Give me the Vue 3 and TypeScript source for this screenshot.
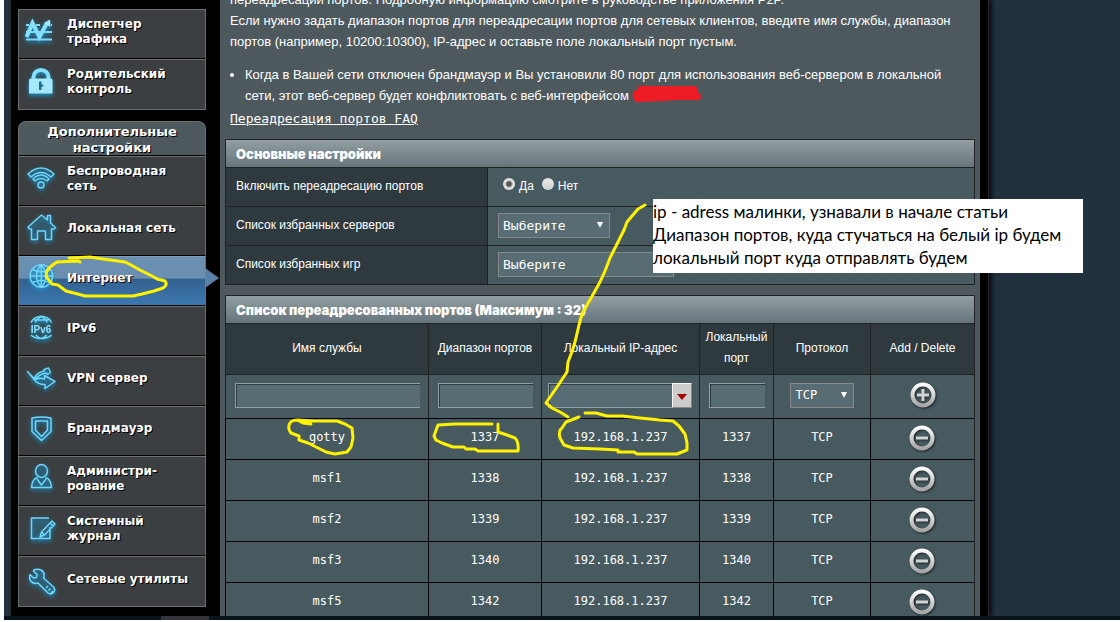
<script setup lang="ts">
import { ref } from 'vue'

interface MenuItem {
  icon: string
  lines: string[]
  active?: boolean
}
interface Rule {
  name: string
  range: string
  ip: string
  port: string
  proto: string
}

const general: MenuItem[] = [
  { icon: 'traffic', lines: ['Диспетчер', 'трафика'] },
  { icon: 'lock', lines: ['Родительский', 'контроль'] },
]
const advanced: MenuItem[] = [
  { icon: 'wifi', lines: ['Беспроводная', 'сеть'] },
  { icon: 'house', lines: ['Локальная сеть'] },
  { icon: 'globe', lines: ['Интернет'], active: true },
  { icon: 'ipv6', lines: ['IPv6'] },
  { icon: 'vpn', lines: ['VPN сервер'] },
  { icon: 'shield', lines: ['Брандмауэр'] },
  { icon: 'admin', lines: ['Администри-', 'рование'] },
  { icon: 'journal', lines: ['Системный', 'журнал'] },
  { icon: 'wrench', lines: ['Сетевые утилиты'] },
]
const groups = [
  { title: [] as string[], items: general },
  { title: ['Дополнительные', 'настройки'], items: advanced },
]

const icons: Record<string, string> = {
  wifi: 'M9 17Q22 5 35 17L32 20Q22 11 12 20ZM14 22Q22 14 30 22L28 24Q22 19 16 24ZM19 28a3 3 0 1 0 6 0a3 3 0 1 0-6 0',
  house: 'M9 20L22.500 8L28.500 13V8.500H31.500V16L36.500 20.500L35 22H32.500V32.500H26.500V24H18.500V32.500H12.500V22H10.500Z',
  globe: 'M11 19a11.300 11.300 0 1 0 22.600 0a11.300 11.300 0 1 0-22.600 0M11 19H33.600M22.300 7.700V30.300M22.300 7.700Q12.500 19 22.300 30.300M22.300 7.700Q32 19 22.300 30.300M13.500 12.500Q22.300 17 31 12.500M13.500 25.500Q22.300 21 31 25.500',
  ipv6: 'M12 15.500Q14.500 10 22.300 9.300Q30 10 32.500 15.500M12 28Q14.500 31 22.300 31.600Q30 31 32.500 28M15 13H29.500M22.300 9.500Q17 12 16.500 15.500M22.300 9.500Q27.500 12 28 15.500M17 28Q18.500 30.500 22.300 31.500Q26 30.500 27.500 28',
  vpn: 'M8.500 14.500L15 21.500Q18 15 25.500 14L25 12.500L29.500 11L31.500 15.500L28.500 17.500L27.500 16Q20 17 15.500 23ZM15.500 23Q20 20 25.500 22V18.500L36 24.500L26 31.500V27.500Q20 28 15.500 23',
  shield: 'M13 11Q22.500 9 32 11V24.500L22.500 33.500L13 24.500ZM16.500 14H28.500V23L22.500 29.500L16.500 23Z',
  admin: 'M16.500 14a6 6.500 0 1 0 12 0a6 6.500 0 1 0-12 0M18.500 20.500Q13 22 12.500 30.500H32.500Q32 22 26.500 20.500M18 22L22.500 28L27 22',
  journal: 'M31 20V31.500H12.500V11H30M21 30L22.500 25L33 14L36 17L25.500 28ZM22.500 25L25.500 28M31 16L34 19',
  wrench: 'M14 12.500L18 16.500L17.500 19.500L14.500 20L11 16.500Q9.500 22 13.500 24.500Q16 26 19 25L29 35Q32 37 34.500 34.500Q37 31.500 34.500 29L24.500 20Q26.500 14.500 22 12Q18 10.500 14 12.500M29 28L27 30M31.500 30.500L29.500 32.500M34 33l-2 2',
}

const rules: Rule[] = [
  { name: 'gotty', range: '1337', ip: '192.168.1.237', port: '1337', proto: 'TCP' },
  { name: 'msf1', range: '1338', ip: '192.168.1.237', port: '1338', proto: 'TCP' },
  { name: 'msf2', range: '1339', ip: '192.168.1.237', port: '1339', proto: 'TCP' },
  { name: 'msf3', range: '1340', ip: '192.168.1.237', port: '1340', proto: 'TCP' },
  { name: 'msf5', range: '1342', ip: '192.168.1.237', port: '1342', proto: 'TCP' },
]

const enabled = ref('yes')
const server = ref('Выберите')
const game = ref('Выберите')
const proto = ref('TCP')
</script>

<template>
  <div class="page">
    <div class="viewport">
      <nav class="sidebar">
        <section v-for="(group, g) in groups" :key="g">
          <h2 v-if="group.title.length" class="group-title">
            <span v-for="line in group.title" :key="line">{{ line }}</span>
          </h2>
          <a v-for="item in group.items" :key="item.icon" href="#" class="item" :class="{ active: item.active }">
            <svg class="item-icon" viewBox="0 0 48 48" aria-hidden="true">
              <g v-if="item.icon === 'traffic'">
                <path d="M7 15H10M17 15H21M32 15H33M7 22H33M7 29.500H33" class="thin" />
                <path d="M7.500 27L13.500 13L20.500 27L28 13" class="thick" />
                <path d="M25 13L31 9.500L31.500 17Z" class="solid" />
              </g>
              <g v-else-if="item.icon === 'lock'">
                <path d="M14.500 18V16a7.500 7 0 0 1 15 0V18" class="thick" />
                <path d="M10 19Q10 17.500 12 17.500H31.500Q33.500 17.500 33.500 19V32.500H10Z" class="solid" />
                <path d="M20 20.500H22.500V23L25 24.500L22.500 26V29H20Z" class="hole" />
              </g>
              <path v-else :d="icons[item.icon]" class="line" />
              <text v-if="item.icon === 'ipv6'" x="22" y="26" text-anchor="middle" class="icon-text">IPv6</text>
            </svg>
            <span class="item-text">
              <span v-for="line in item.lines" :key="line">{{ line }}</span>
            </span>
          </a>
        </section>
      </nav>

      <main class="panel">
        <p class="desc">
          переадресации портов. Подробную информацию смотрите в руководстве приложения P2P.<br />
          Если нужно задать диапазон портов для переадресации портов для сетевых клиентов, введите имя службы, диапазон<br />
          портов (например, 10200:10300), IP-адрес и оставьте поле локальный порт пустым.
        </p>
        <ul class="notes">
          <li>
            Когда в Вашей сети отключен брандмауэр и Вы установили 80 порт для использования веб-сервером в локальной<br />
            сети, этот веб-сервер будет конфликтовать с веб-интерфейсом
          </li>
        </ul>
        <a href="#" class="faq">Переадресация портов FAQ</a>

        <table class="grid basic">
          <colgroup><col class="c-label" /><col /></colgroup>
          <thead>
            <tr><th colspan="2" class="title">Основные настройки</th></tr>
          </thead>
          <tbody>
            <tr>
              <th scope="row">Включить переадресацию портов</th>
              <td>
                <div class="radios">
                  <label><input v-model="enabled" type="radio" name="enabled" value="yes" /><span>Да</span></label>
                  <label><input v-model="enabled" type="radio" name="enabled" value="no" /><span>Нет</span></label>
                </div>
              </td>
            </tr>
            <tr>
              <th scope="row"><label for="server">Список избранных серверов</label></th>
              <td>
                <span class="pick w-server">
                  <select id="server" v-model="server"><option>Выберите</option></select>
                  <svg viewBox="0 0 8 8" aria-hidden="true"><path d="M1 1H7L4 7Z" /></svg>
                </span>
              </td>
            </tr>
            <tr>
              <th scope="row"><label for="game">Список избранных игр</label></th>
              <td>
                <span class="pick w-game">
                  <select id="game" v-model="game"><option>Выберите</option></select>
                  <svg viewBox="0 0 8 8" aria-hidden="true"><path d="M1 1H7L4 7Z" /></svg>
                </span>
              </td>
            </tr>
          </tbody>
        </table>

        <table class="grid ports">
          <colgroup>
            <col /><col class="c-range" /><col class="c-ip" /><col class="c-port" /><col class="c-proto" /><col class="c-act" />
          </colgroup>
          <thead>
            <tr><th colspan="6" class="title">Список переадресованных портов (Максимум : 32)</th></tr>
            <tr class="heads">
              <th scope="col">Имя службы</th>
              <th scope="col">Диапазон портов</th>
              <th scope="col">Локальный IP-адрес</th>
              <th scope="col">Локальный порт</th>
              <th scope="col">Протокол</th>
              <th scope="col">Add / Delete</th>
            </tr>
          </thead>
          <tbody>
            <tr class="entry">
              <td><input type="text" class="field" aria-label="Имя службы" /></td>
              <td><input type="text" class="field" aria-label="Диапазон портов" /></td>
              <td>
                <div class="combo">
                  <input type="text" class="field" aria-label="Локальный IP-адрес" />
                  <button type="button" aria-label="Выбрать адрес">
                    <svg viewBox="0 0 12 8" aria-hidden="true"><path d="M1 1H11L6 7Z" /></svg>
                  </button>
                </div>
              </td>
              <td><input type="text" class="field" aria-label="Локальный порт" /></td>
              <td>
                <span class="pick w-proto">
                  <select v-model="proto" aria-label="Протокол"><option>TCP</option><option>UDP</option></select>
                  <svg viewBox="0 0 8 8" aria-hidden="true"><path d="M1 1H7L4 7Z" /></svg>
                </span>
              </td>
              <td>
                <button type="button" class="round" aria-label="Добавить">
                  <svg viewBox="0 0 28 28" aria-hidden="true">
                    <defs>
                      <linearGradient id="metal" x1="0" y1="0" x2="0" y2="28" gradientUnits="userSpaceOnUse">
                        <stop offset="0.1" stop-color="#ffffff" />
                        <stop offset="0.9" stop-color="#a4a4a4" />
                      </linearGradient>
                    </defs>
                    <circle cx="14" cy="14" r="10.500" class="ring" />
                    <path d="M12.500 8H15.500V12.500H20V15.500H15.500V20H12.500V15.500H8V12.500H12.500Z" class="sign" />
                  </svg>
                </button>
              </td>
            </tr>
            <tr v-for="rule in rules" :key="rule.name" class="rule">
              <td>{{ rule.name }}</td>
              <td>{{ rule.range }}</td>
              <td>{{ rule.ip }}</td>
              <td>{{ rule.port }}</td>
              <td>{{ rule.proto }}</td>
              <td>
                <button type="button" class="round" aria-label="Удалить">
                  <svg viewBox="0 0 28 28" aria-hidden="true">
                    <circle cx="14" cy="14" r="10.500" class="ring" />
                    <path d="M8 12.500H20V15.500H8Z" class="sign" />
                  </svg>
                </button>
              </td>
            </tr>
          </tbody>
        </table>
      </main>
    </div>
    <div class="taskbar"><span></span></div>

    <svg class="ink" width="1120" height="622" aria-hidden="true">
      <path class="red" d="M634 91L637 90L639 86Q641 85 645 86L695 86Q698 87 698 92Q703 96 700 99Q697 101 692 100L675 100L664 101L640 102Q635 103 634 99Q631 95 634 91Z" />
      <path d="M69 258L90 257L103 259L125 262L131 265L140 270L152 276L157 279L165 281Q168 285 163 288L154 291L142 294L133 296L85 296L74 293L66 291L58 285L52 284L48 279Q45 276 47 271L50 267L57 262L78 261L80 262" />
      <path d="M645 205L638 209L632 216L627 222L624 230L620 238L616 246L610 258L605 271L600 282L595 291L587 305L582 314L579 325L576 338L573 349L568 362L567 372L561 381L557 387L548 400L546 403L552 408L560 412L568 417" />
      <path d="M311 424L303 423L297 420L314 421L337 421L345 424L352 428L353 438L351 447L347 452L335 454L326 452L316 447L308 443L299 440L299 436L291 433Q287 428 290 423Q292 420 297 420" />
      <path d="M492 424L455 424L438 425L434 436L436 440L442 443L453 447L464 447L466 449L475 449L478 451L518 451Q519 442 515 438L507 435L498 432L498 424" />
      <path d="M585 413L596 413L607 416L622 416L640 418L660 420L673 421L679 426L685 434L687 443V450L677 454L637 454L634 452L618 452V450L600 449L573 448L564 445L560 438Q558 431 562 428L566 422L579 417" />
    </svg>
    <p class="callout">
      ip - adress малинки, узнавали в начале статьи<br />
      Диапазон портов, куда стучаться на белый ip будем<br />
      локальный порт куда отправлять будем
    </p>
  </div>
</template>

<style>
body {
  margin: 0;
  overflow: hidden;
}
</style>

<style scoped>
* {
  box-sizing: border-box;
}
.page {
  position: relative;
  display: flex;
  flex-direction: column;
  height: 100vh;
  padding: 0 0 2px 4px;
  overflow: hidden;
  background: #fff;
  color: #fff;
  font: 12px/21px "Liberation Sans", Arial, sans-serif;
}
.viewport {
  display: flex;
  flex: 1;
  min-height: 0;
  padding: 0 132px 0 6px;
  overflow: hidden;
  background: #21323e;
}
.taskbar {
  flex: none;
  height: 4px;
  padding-left: 157px;
  background: #08131a;
}
.taskbar span {
  display: block;
  width: 48px;
  height: 4px;
  background: #33363a;
}

/* left menu */
.sidebar {
  flex: none;
  display: flex;
  flex-direction: column;
  gap: 11px;
  width: 210px;
  padding: 9px 14px 0 7px;
  border-left: 1px solid #2a2a2a;
  background: #000;
  font: bold 12px/15px "DejaVu Sans", Verdana, sans-serif;
  text-shadow: 1px 1px 0 #000;
}
.group-title {
  display: flex;
  flex-direction: column;
  height: 35px;
  margin: 0;
  padding-top: 2px;
  border: 1px solid #6b7071;
  border-bottom-color: #000;
  border-radius: 8px 8px 0 0;
  background: #4d595d;
  font-size: 13px;
  line-height: 16px;
  text-align: center;
}
.item {
  position: relative;
  display: flex;
  align-items: center;
  height: 50px;
  border: 1px solid #6b7071;
  border-bottom-color: #000;
  background: #3b3f41;
  color: #fff;
  text-decoration: none;
}
.item:last-child {
  height: 51px;
  border-bottom-color: #6b7071;
}
.item.active {
  border-top-color: #7d9cb8;
  background: linear-gradient(#6b8fb0 0 44%, #33618f 46%, #3c78b0);
}
.item.active::after {
  content: "";
  position: absolute;
  top: 11px;
  left: 100%;
  width: 14px;
  height: 20px;
  background: #5b81a6;
  clip-path: polygon(0 0, 100% 50%, 0 100%);
}
.item-icon {
  flex: none;
  width: 48px;
  height: 48px;
  filter: drop-shadow(0 2px 2px #1593cc);
}
.item-text {
  display: flex;
  flex-direction: column;
  padding-bottom: 5px;
  white-space: nowrap;
}
.line {
  fill: #2b7fa033;
  fill-rule: evenodd;
  stroke: #6fd6fa;
  stroke-width: 1.5;
  stroke-linejoin: round;
}
.thin {
  fill: none;
  stroke: #7fd8f6;
  stroke-width: 2;
}
.thick {
  fill: none;
  stroke: #86dffc;
  stroke-width: 4;
}
.solid {
  fill: #a5e8fd;
}
.hole {
  fill: #1e6f8f;
}
.icon-text {
  fill: #8fe2fb;
  font: bold 10px "Liberation Sans", sans-serif;
  text-shadow: none;
}

/* content */
.panel {
  flex: 1;
  min-width: 0;
  padding: 0 5px;
  border-right: 8px solid #000;
  background: #4d595d;
  box-shadow: 1px 0 0 #2a2a2a, 3px 0 5px #000;
}
.desc {
  margin: -11px 0 12px;
  padding-left: 5px;
  font-size: 13px;
  white-space: nowrap;
}
.notes {
  margin: 0;
  padding-left: 20px;
  font-size: 13px;
  white-space: nowrap;
}
.faq {
  display: block;
  width: max-content;
  margin: 2px 0 10px 5px;
  color: #fff;
  font: 13px/21px "DejaVu Sans Mono", monospace;
}
.grid {
  width: 100%;
  border: solid #222;
  border-width: 0 1px 1px 0;
  border-spacing: 0;
  table-layout: fixed;
  background: #475a5f;
}
.grid th,
.grid td {
  padding: 0 10px 2px;
  border: solid #222;
  border-width: 1px 0 0 1px;
  font-weight: normal;
}
.grid th {
  background: #2f3a3e;
}
.grid .title {
  height: 28px;
  padding: 0 10px;
  background: linear-gradient(#929ea1, #66757c);
  font: 900 13px/20px Inter, "Liberation Sans", sans-serif;
  text-align: left;
}
.basic {
  margin-bottom: 10px;
}
.basic tbody th {
  height: 39px;
  text-align: left;
}
.c-label {
  width: 262px;
}
.radios {
  display: flex;
  gap: 8px;
  padding-left: 5px;
}
.radios label {
  display: flex;
  align-items: center;
  gap: 4px;
}
.radios input {
  appearance: none;
  width: 12px;
  height: 12px;
  margin: 0 0 4px;
  border-radius: 50%;
  background: linear-gradient(#e8e8e8, #d4d4d4);
}
.radios input:checked {
  background: radial-gradient(circle, #555 0 2px, #e2e2e2 4px);
}
.pick {
  position: relative;
  display: block;
  height: 25px;
}
.pick select {
  appearance: none;
  width: 100%;
  height: 25px;
  padding: 0 4px;
  border: 1px solid #888;
  border-radius: 0;
  background: #576d73;
  color: #fff;
  font: 13px "DejaVu Sans Mono", monospace;
}
.pick svg {
  position: absolute;
  top: 8px;
  right: 6px;
  width: 8px;
  height: 8px;
  fill: #fff;
  pointer-events: none;
}
.w-server {
  width: 112px;
}
.w-game {
  width: 176px;
}
.w-proto {
  width: 64px;
  margin: 0 auto;
}
.pick.w-proto select {
  font-size: 12px;
}
.c-range {
  width: 113px;
}
.c-ip {
  width: 158px;
}
.c-port {
  width: 74px;
}
.c-proto {
  width: 97px;
}
.c-act {
  width: 104px;
}
.ports th,
.ports td {
  text-align: center;
}
.ports .heads th {
  height: 51px;
  padding: 0 2px 2px;
}
.ports .entry td {
  height: 44px;
  padding: 0 8px 3px 9px;
  line-height: 0;
}
.ports .entry td:nth-child(3) {
  padding: 0 7px 3px 6px;
}
.field {
  width: 100%;
  height: 25px;
  min-width: 0;
  border: 1px solid #929ea1;
  border-right: 0;
  border-radius: 0;
  background: #576d73;
  box-shadow: inset 1px 1px 0 #2f3a3e;
  color: #fff;
}
.combo {
  display: flex;
}
.combo button {
  flex: none;
  display: flex;
  align-items: center;
  justify-content: center;
  width: 20px;
  height: 25px;
  padding: 4px 0 0;
  border: 1px solid;
  border-color: #f4f4f4 #888 #888 #f4f4f4;
  background: #ccc;
}
.combo svg {
  width: 12px;
  height: 8px;
  fill: #a80000;
}
.ports .rule td {
  height: 41px;
  padding-bottom: 4px;
  border-color: #000;
  font: 12px/20px "DejaVu Sans Mono", monospace;
}
.ports .rule td:last-child {
  padding-bottom: 2px;
  line-height: 0;
}
.round {
  width: 28px;
  height: 28px;
  padding: 0;
  border: 0;
  background: none;
  filter: drop-shadow(1px 1px 1px #1c2426);
}
.round svg {
  display: block;
}
.ring {
  fill: none;
  stroke: url(#metal);
  stroke-width: 4;
}
.sign {
  fill: #d4d4d4;
}

/* hand-drawn notes over the page */
.ink {
  position: absolute;
  top: 0;
  left: 0;
  fill: none;
  stroke: #fff200;
  stroke-width: 3;
  stroke-linecap: round;
  stroke-linejoin: round;
  pointer-events: none;
}
.ink .red {
  fill: #ed1c24;
  stroke: none;
}
.callout {
  position: absolute;
  top: 199px;
  left: 653px;
  width: 430px;
  margin: 0;
  padding: 1px 0 4px;
  background: #fff;
  color: #000;
  font: 17px/23px Lato, "Open Sans", sans-serif;
  white-space: nowrap;
}
</style>
